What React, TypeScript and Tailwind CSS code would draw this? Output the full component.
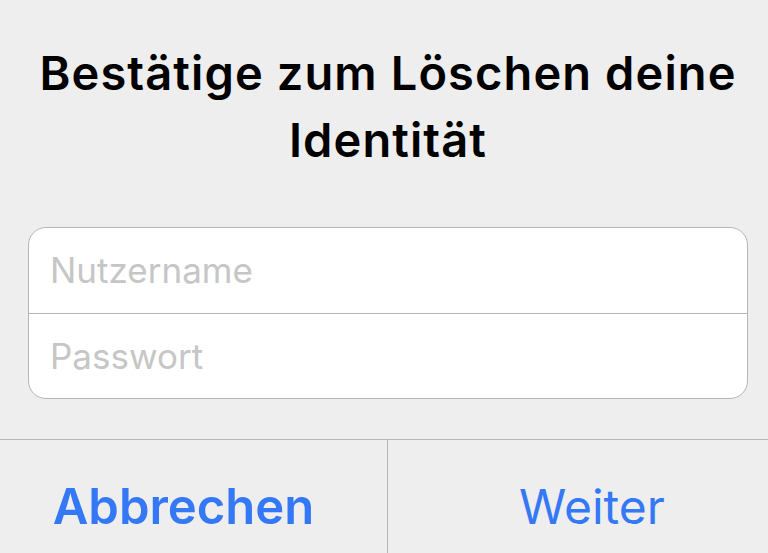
export default function App() {
  return (
    <div className="w-[768px] h-[553px] overflow-hidden bg-[#eeeeee] font-['Inter','Noto_Sans',sans-serif]">
      {/* Alert is wider than the viewport, cropped on both sides */}
      <div className="w-[816px] h-full -ml-[20px] flex flex-col">
        {/* Title */}
        <div className="pt-[39px] px-6 text-center">
          <h1 className="text-[47px] leading-[67px] font-semibold text-black tracking-[1.1px]">
            Bestätige zum Löschen deine Identität
          </h1>
        </div>

        {/* Login fields */}
        <div className="mt-[54px] mx-[48px] rounded-[18px] border border-[#b5b5b5] bg-white overflow-hidden">
          <div className="h-[86px] flex items-center px-[21px] border-b border-[#b5b5b5]">
            <span className="text-[35px] text-[#c6c6c6]">Nutzername</span>
          </div>
          <div className="h-[84px] flex items-center px-[21px]">
            <span className="text-[35px] text-[#c6c6c6]">Passwort</span>
          </div>
        </div>

        {/* Actions */}
        <div className="mt-[40px] flex-1 flex border-t border-[#b5b5b5]">
          <button className="w-[408px] shrink-0 flex items-center justify-center pt-[20px] border-r border-[#b5b5b5] text-[49px] font-semibold text-[#3478f6]">
            Abbrechen
          </button>
          <button className="flex-1 flex items-center justify-center pt-[20px] text-[48px] text-[#3478f6]">
            Weiter
          </button>
        </div>
      </div>
    </div>
  );
}
